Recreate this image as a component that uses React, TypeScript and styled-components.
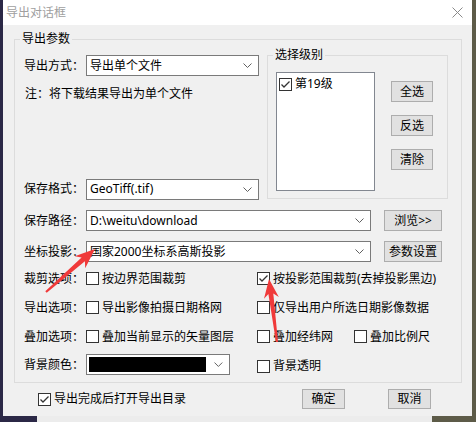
import React from "react";
import styled, { createGlobalStyle } from "styled-components";

const FONT = `"Noto Sans", "Noto Sans CJK SC", sans-serif`;

const GlobalStyle = createGlobalStyle`
  html, body { margin: 0; padding: 0; }
  body {
    width: 476px;
    height: 422px;
    overflow: hidden;
    font-family: ${FONT};
    font-size: 12px;
    line-height: 16px;
    color: #000;
    background: #2b2846;
  }
`;

const Screen = styled.div`
  position: relative;
  width: 476px;
  height: 422px;
  display: flex;
  flex-direction: column;
  background: linear-gradient(90deg, #2b2846 0, #2b2846 50%, #5d5b48 50%, #5d5b48 100%);
`;

const Dialog = styled.div`
  margin-left: 3px;
  width: 469px;
  height: 416px;
  background: #f0f0f0;
  display: flex;
  flex-direction: column;
`;

const TitleBar = styled.div`
  height: 25px;
  flex: none;
  background: #fff;
  display: flex;
  align-items: center;
  justify-content: space-between;
  padding: 0 9px 0 3px;
  color: #a0a0a0;
`;

const Body = styled.div`
  flex: 1;
  display: flex;
  flex-direction: column;
  padding: 6px 10px 0 11px;
`;

const Group = styled.fieldset<{ $w?: number }>`
  margin: 0;
  padding: 0;
  border: 1px solid #dcdcdc;
  min-width: 0;
  display: flex;
  flex-direction: column;
  ${(p) => (p.$w ? `width: ${p.$w}px; flex: none;` : "")}
`;

const Legend = styled.legend`
  margin-left: 5px;
  padding: 0 2px;
  line-height: 16px;
  font-size: 12px;
`;

const MainInner = styled.div`
  display: flex;
  flex-direction: column;
  padding: 0 0 7px 9px;
`;

const TopSection = styled.div`
  display: flex;
  height: 152px;
`;

const LeftCol = styled.div`
  width: 243px;
  flex: none;
  display: flex;
  flex-direction: column;
  padding-top: 8px;
`;

const Row = styled.div<{ $mt?: number; $h?: number }>`
  display: flex;
  align-items: center;
  height: ${(p) => p.$h ?? 21}px;
  margin-top: ${(p) => p.$mt ?? 0}px;
  flex: none;
`;

const Label = styled.div`
  width: 62px;
  flex: none;
  white-space: nowrap;
`;

const Note = styled.div`
  margin-top: 10px;
  padding-left: 1px;
`;

const Spacer = styled.div`
  flex: 1;
`;

const Combo = styled.div<{ $w: number }>`
  width: ${(p) => p.$w}px;
  height: 21px;
  box-sizing: border-box;
  border: 1px solid #7a7a7a;
  background: #fff;
  display: flex;
  align-items: center;
  padding: 0 6px 0 3px;
  flex: none;
`;

const ComboText = styled.div`
  flex: 1;
  white-space: nowrap;
  overflow: hidden;
`;

const ColorFill = styled.div`
  width: 120px;
  height: 15px;
  background: #000;
  margin-left: -1px;
  margin-right: 8px;
`;

const Chevron = () => (
  <svg width="9" height="5" viewBox="0 0 9 5">
    <polyline points="0.5,0.5 4.5,4.5 8.5,0.5" fill="none" stroke="#606060" strokeWidth="1" />
  </svg>
);

const Button = styled.div<{ $w: number; $h?: number; $ml?: number }>`
  width: ${(p) => p.$w}px;
  height: ${(p) => p.$h ?? 21}px;
  margin-left: ${(p) => p.$ml ?? 0}px;
  box-sizing: border-box;
  border: 1px solid #adadad;
  background: #e1e1e1;
  display: flex;
  align-items: center;
  justify-content: center;
  flex: none;
  white-space: nowrap;
`;

const SubInner = styled.div`
  flex: 1;
  display: flex;
  padding: 9px 0 6px 8px;
`;

const ListBox = styled.div`
  width: 99px;
  height: 119px;
  box-sizing: border-box;
  border: 1px solid #828790;
  background: #fff;
  padding: 3px 0 0 2px;
  flex: none;
`;

const SideButtons = styled.div`
  display: flex;
  flex-direction: column;
  gap: 13px;
  margin-left: 16px;
  padding-top: 9px;
`;

const CheckCell = styled.div<{ $w?: number; $mt?: number; $ml?: number }>`
  display: flex;
  align-items: center;
  gap: 3px;
  white-space: nowrap;
  ${(p) => (p.$w ? `width: ${p.$w}px; flex: none;` : "")}
  ${(p) => (p.$mt ? `margin-top: ${p.$mt}px;` : "")}
  ${(p) => (p.$ml ? `margin-left: ${p.$ml}px;` : "")}
`;

const Box = styled.div`
  width: 13px;
  height: 13px;
  box-sizing: border-box;
  border: 1px solid #333;
  background: #fff;
  flex: none;
  display: flex;
  align-items: center;
  justify-content: center;
`;

const Check: React.FC<{ checked?: boolean; children?: React.ReactNode; w?: number; mt?: number; ml?: number }> = ({
  checked,
  children,
  w,
  mt,
  ml,
}) => (
  <CheckCell $w={w} $mt={mt} $ml={ml}>
    <Box>
      {checked && (
        <svg width="11" height="11" viewBox="0 0 11 11">
          <polyline points="1.5,5.5 4,8 9.5,2.5" fill="none" stroke="#333" strokeWidth="1.3" />
        </svg>
      )}
    </Box>
    {children}
  </CheckCell>
);

const Footer = styled.div`
  display: flex;
  align-items: center;
  margin-top: 6px;
  height: 20px;
  padding-left: 24px;
`;

const FooterButtons = styled.div`
  margin-left: auto;
  display: flex;
  gap: 43px;
  margin-right: 31px;
`;

const BottomStrip = styled.div`
  margin-left: 37px;
  width: 395px;
  height: 6px;
  background: #ececec;
`;

const Overlay = styled.svg`
  position: absolute;
  left: 0;
  top: 0;
  pointer-events: none;
`;

function arrow(x1: number, y1: number, x2: number, y2: number, hl: number, hw: number, tw: number, nw: number) {
  const dx = x2 - x1;
  const dy = y2 - y1;
  const L = Math.hypot(dx, dy);
  const ux = dx / L;
  const uy = dy / L;
  const px = -uy;
  const py = ux;
  const nx = x2 - ux * hl * 0.78;
  const ny = y2 - uy * hl * 0.78;
  const bx = x2 - ux * hl;
  const by = y2 - uy * hl;
  const pts: [number, number][] = [
    [x1 + (px * tw) / 2, y1 + (py * tw) / 2],
    [nx + (px * nw) / 2, ny + (py * nw) / 2],
    [bx + (px * hw) / 2, by + (py * hw) / 2],
    [x2, y2],
    [bx - (px * hw) / 2, by - (py * hw) / 2],
    [nx - (px * nw) / 2, ny - (py * nw) / 2],
    [x1 - (px * tw) / 2, y1 - (py * tw) / 2],
  ];
  return pts.map((p) => `${p[0].toFixed(1)},${p[1].toFixed(1)}`).join(" ");
}

export default function App() {
  return (
    <>
      <GlobalStyle />
      <Screen>
        <Dialog>
          <TitleBar>
            <span>导出对话框</span>
            <svg width="11" height="11" viewBox="0 0 11 11">
              <path d="M0.5 0.5 L10.5 10.5 M10.5 0.5 L0.5 10.5" stroke="#8a8a8a" strokeWidth="1" />
            </svg>
          </TitleBar>
          <Body>
            <Group>
              <Legend>导出参数</Legend>
              <MainInner>
                <TopSection>
                  <LeftCol>
                    <Row>
                      <Label>导出方式：</Label>
                      <Combo $w={173}>
                        <ComboText>导出单个文件</ComboText>
                        <Chevron />
                      </Combo>
                    </Row>
                    <Note>注：将下载结果导出为单个文件</Note>
                    <Spacer />
                    <Row $h={20}>
                      <Label>保存格式：</Label>
                      <Combo $w={173}>
                        <ComboText>GeoTiff(.tif)</ComboText>
                        <Chevron />
                      </Combo>
                    </Row>
                  </LeftCol>
                  <Group $w={179}>
                    <Legend>选择级别</Legend>
                    <SubInner>
                      <ListBox>
                        <Check checked>第19级</Check>
                      </ListBox>
                      <SideButtons>
                        <Button $w={42}>全选</Button>
                        <Button $w={42}>反选</Button>
                        <Button $w={42}>清除</Button>
                      </SideButtons>
                    </SubInner>
                  </Group>
                </TopSection>
                <Row $mt={11}>
                  <Label>保存路径：</Label>
                  <Combo $w={285}>
                    <ComboText>D:\weitu\download</ComboText>
                    <Chevron />
                  </Combo>
                  <Button $w={58} $ml={13}>浏览&gt;&gt;</Button>
                </Row>
                <Row $mt={10}>
                  <Label>坐标投影：</Label>
                  <Combo $w={285}>
                    <ComboText>国家2000坐标系高斯投影</ComboText>
                    <Chevron />
                  </Combo>
                  <Button $w={58} $ml={13}>参数设置</Button>
                </Row>
                <Row $mt={10} $h={13}>
                  <Label>裁剪选项：</Label>
                  <Check w={171}>按边界范围裁剪</Check>
                  <Check checked>按投影范围裁剪(去掉投影黑边)</Check>
                </Row>
                <Row $mt={16} $h={13}>
                  <Label>导出选项：</Label>
                  <Check w={171}>导出影像拍摄日期格网</Check>
                  <Check>仅导出用户所选日期影像数据</Check>
                </Row>
                <Row $mt={16} $h={13}>
                  <Label>叠加选项：</Label>
                  <Check w={171}>叠加当前显示的矢量图层</Check>
                  <Check w={97}>叠加经纬网</Check>
                  <Check>叠加比例尺</Check>
                </Row>
                <Row $mt={11}>
                  <Label>背景颜色：</Label>
                  <Combo $w={144}>
                    <ColorFill />
                    <Chevron />
                  </Combo>
                  <Check mt={3} ml={27}>背景透明</Check>
                </Row>
              </MainInner>
            </Group>
            <Footer>
              <Check checked>导出完成后打开导出目录</Check>
              <FooterButtons>
                <Button $w={43} $h={20}>确定</Button>
                <Button $w={43} $h={20}>取消</Button>
              </FooterButtons>
            </Footer>
          </Body>
        </Dialog>
        <BottomStrip />
        <Overlay width="476" height="422" viewBox="0 0 476 422">
          <polygon points={arrow(46, 292, 95, 249, 20, 16, 2, 5)} fill="#f03a3a" />
          <polygon points={arrow(277, 342, 269, 279, 19, 15, 2, 5)} fill="#f03a3a" />
        </Overlay>
      </Screen>
    </>
  );
}
